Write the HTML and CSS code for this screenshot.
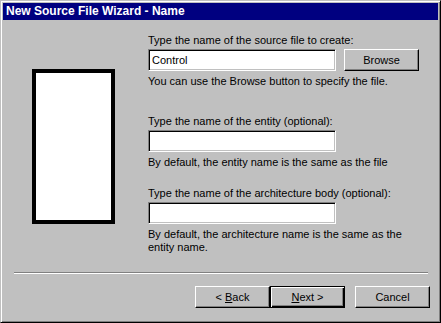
FILE: index.html
```html
<!DOCTYPE html>
<html lang="en">
<head>
    <meta charset="UTF-8">
    <title>New Source File Wizard - Name</title>
    <link rel="stylesheet" href="styles.css">
</head>
<body>
    <div class="window">
        <div class="titlebar">New Source File Wizard - Name</div>
        <div class="content">
            <div class="art"></div>
            <div class="fields">
                <label class="label" for="srcFile">Type the name of the source file to create:</label>
                <div class="row">
                    <input class="field" id="srcFile" type="text" value="Control">
                    <button class="btn browse">Browse</button>
                </div>
                <p class="hint">You can use the Browse button to specify the file.</p>

                <label class="label second" for="entity">Type the name of the entity (optional):</label>
                <input class="field" id="entity" type="text">
                <p class="hint">By default, the entity name is the same as the file</p>

                <label class="label third" for="arch">Type the name of the architecture body (optional):</label>
                <input class="field" id="arch" type="text">
                <p class="hint">By default, the architecture name is the same as the<br>entity name.</p>
            </div>
        </div>
        <div class="divider"></div>
        <div class="actions">
            <button class="btn">&lt; <u>B</u>ack</button>
            <button class="btn default"><u>N</u>ext &gt;</button>
            <button class="btn cancel">Cancel</button>
        </div>
    </div>
</body>
</html>
```

FILE: styles.css
```css
body {
    margin: 0;
    padding: 0;
    background: #c0c0c0;
    font-family: 'Liberation Sans', Arial, sans-serif;
    font-size: 11px;
    color: #000;
}

.window {
    box-sizing: border-box;
    width: 441px;
    height: 323px;
    padding: 2px;
    background: #c0c0c0;
    border: 1px solid;
    border-color: #c0c0c0 #000 #000 #c0c0c0;
    box-shadow: inset 1px 1px #fff, inset -1px -1px #808080;
}

.titlebar {
    height: 17px;
    line-height: 17px;
    padding-left: 3px;
    background: #000080;
    color: #fff;
    font-weight: bold;
    font-size: 12px;
}

.content {
    display: flex;
    align-items: flex-start;
    height: 252px;
}

.art {
    box-sizing: border-box;
    width: 83px;
    height: 155px;
    margin: 49px 0 0 29px;
    background: #fff;
    border: 4px solid #000;
}

.fields {
    margin-left: 33px;
    padding-top: 14px;
    display: flex;
    flex-direction: column;
    align-items: flex-start;
}

.label {
    display: block;
    line-height: 13px;
    margin-bottom: 2px;
}

.label.second {
    margin-top: 27px;
}

.label.third {
    margin-top: 18px;
}

.row {
    display: flex;
    gap: 8px;
}

.field {
    box-sizing: border-box;
    width: 188px;
    height: 22px;
    margin: 0;
    padding: 0 3px;
    background: #fff;
    border: 1px solid;
    border-color: #808080 #fff #fff #808080;
    box-shadow: inset 1px 1px #000, inset -1px -1px #c0c0c0;
    font-family: inherit;
    font-size: 11px;
    color: #000;
    outline: none;
}

.hint {
    margin: 4px 0 0;
    line-height: 13px;
}

.btn {
    box-sizing: border-box;
    width: 75px;
    height: 22px;
    padding: 0;
    background: #c0c0c0;
    border: 1px solid;
    border-color: #fff #000 #000 #fff;
    box-shadow: inset -1px -1px #808080;
    font-family: inherit;
    font-size: 11px;
    color: #000;
}

.btn.default {
    border-color: #000;
    box-shadow: inset 1px 1px #fff, inset -1px -1px #000, inset -2px -2px #808080;
}

.divider {
    margin: 0 10px 0 11px;
    border-top: 1px solid #808080;
    border-bottom: 1px solid #fff;
}

.actions {
    display: flex;
    justify-content: flex-end;
    margin-top: 12px;
    padding-right: 8px;
}

.btn.cancel {
    margin-left: 10px;
}
```
